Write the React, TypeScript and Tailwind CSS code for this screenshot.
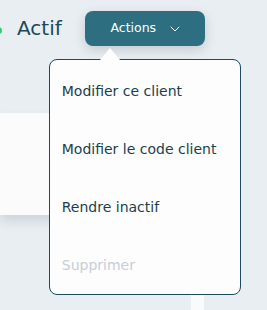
import { ChevronDown } from 'lucide-react'

const items = [
  { label: 'Modifier ce client', disabled: false },
  { label: 'Modifier le code client', disabled: false },
  { label: 'Rendre inactif', disabled: false },
  { label: 'Supprimer', disabled: true },
]

export default function App() {
  return (
    <div className="relative h-[310px] w-[267px] overflow-hidden bg-[#e9eef2] font-['DejaVu_Sans',sans-serif]">
      <div className="flex items-center pt-[11px]">
        <span className="-ml-[5px] mt-[4px] h-[7px] w-[7px] rounded-full bg-[#2ecc71]" />
        <span className="ml-[15px] text-[20px] leading-[35px] text-[#1d4957]">Actif</span>
        <div className="relative ml-[23px]">
          <button className="flex h-[35px] w-[120px] items-center justify-center gap-[11px] rounded-[8px] bg-[#2d6f80] pl-[4px] text-[12.5px] font-medium text-white shadow-[0_4px_12px_rgba(30,50,70,0.18)]">
            Actions
            <ChevronDown size={16} strokeWidth={1.5} />
          </button>

          <div className="absolute left-[-36px] top-[48px] z-10 w-[192px]">
            <svg className="absolute left-[51px] top-[-12px]" width="20" height="13" viewBox="0 0 20 13">
              <polygon points="0,13 10,1 20,13" fill="#fdfdfd" />
            </svg>
            <ul className="rounded-[8px] border border-[#1e4b5b] bg-[#fdfdfd] pb-[0px] pt-[2px]">
              {items.map((item) => (
                <li
                  key={item.label}
                  className={`flex h-[58px] items-center px-[12px] text-[14px] ${
                    item.disabled ? 'text-[#c7ced7]' : 'text-[#1b3f4c]'
                  }`}
                >
                  {item.label}
                </li>
              ))}
            </ul>
          </div>
        </div>
      </div>

      <div className="mt-[67px] h-[102px] w-[200px] bg-[#fbfbfb] shadow-[0_6px_10px_rgba(40,60,80,0.14)]" />
      <div className="ml-[191px] mt-[20px] h-[100px] w-[13px] bg-[#f9fafb]" />
    </div>
  )
}
